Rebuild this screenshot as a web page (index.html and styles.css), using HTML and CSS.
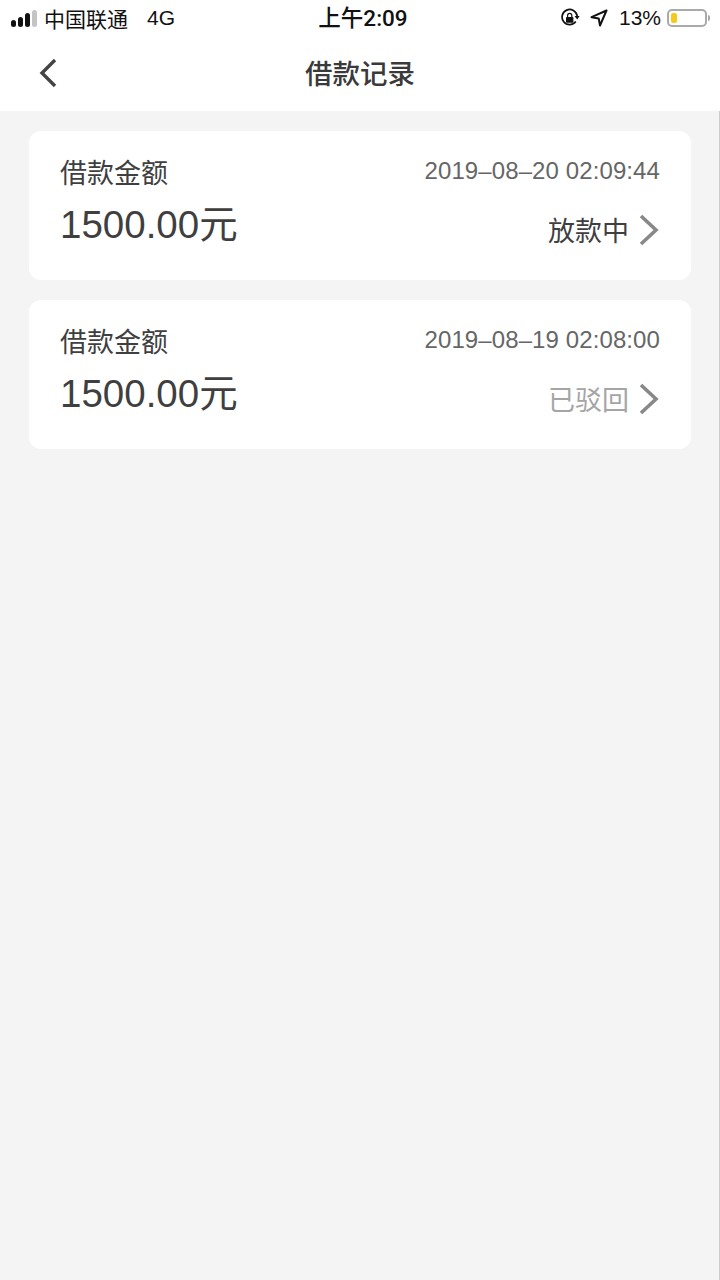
FILE: index.html
```html
<!DOCTYPE html>
<html lang="zh-CN">
<head>
    <meta charset="UTF-8">
    <title>借款记录</title>
    <link rel="stylesheet" href="styles.css">
</head>
<body>
    <div class="status">
        <div class="status-left">
            <div class="signal"><i></i><i></i><i></i><i class="off"></i></div>
            <span class="carrier">中国联通</span>
            <span class="net">4G</span>
        </div>
        <div class="clock">上午2:09</div>
        <div class="status-right">
            <svg class="lock" width="20" height="20" viewBox="0 0 20 20">
                <path d="M15.8 13.6A7.6 7.6 0 1 1 17.2 8" fill="none" stroke="#111" stroke-width="1.7"/>
                <path d="M14.6 8h5l-2.4 3.4z" fill="#111"/>
                <rect x="6" y="9" width="7.4" height="5.8" rx="0.8" fill="#111"/>
                <path d="M7.6 9V7.4a2.1 2.1 0 0 1 4.2 0V9" fill="none" stroke="#111" stroke-width="1.2"/>
            </svg>
            <svg class="arrow" width="18" height="18" viewBox="0 0 18 18">
                <path d="M16.5 1.5L1.5 8.2l7.2 1.2 1.3 7.1z" fill="none" stroke="#111" stroke-width="2" stroke-linejoin="round"/>
            </svg>
            <span class="percent">13%</span>
            <div class="battery"><div class="level"></div></div>
            <div class="battery-tip"></div>
        </div>
    </div>

    <div class="header">
        <svg class="back" width="20" height="32" viewBox="0 0 20 32">
            <path d="M17 3L4 16l13 13" fill="none" stroke="#444" stroke-width="3.4"/>
        </svg>
        <div class="title">借款记录</div>
    </div>

    <div class="list">
        <div class="card">
            <div class="row">
                <span class="label">借款金额</span>
                <span class="time">2019–08–20 02:09:44</span>
            </div>
            <div class="row row-bottom">
                <span class="amount">1500.00元</span>
                <div class="state">
                    <span>放款中</span>
                    <svg class="more" width="22" height="34" viewBox="0 0 22 34">
                        <path d="M3 3l15 14L3 31" fill="none" stroke="#888" stroke-width="3.6"/>
                    </svg>
                </div>
            </div>
        </div>
        <div class="card">
            <div class="row">
                <span class="label">借款金额</span>
                <span class="time">2019–08–19 02:08:00</span>
            </div>
            <div class="row row-bottom">
                <span class="amount">1500.00元</span>
                <div class="state rejected">
                    <span>已驳回</span>
                    <svg class="more" width="22" height="34" viewBox="0 0 22 34">
                        <path d="M3 3l15 14L3 31" fill="none" stroke="#888" stroke-width="3.6"/>
                    </svg>
                </div>
            </div>
        </div>
    </div>
</body>
</html>
```

FILE: styles.css
```css
html, body{
    margin: 0;
    padding: 0;
}
body{
    display: flex;
    flex-direction: column;
    width: 720px;
    height: 1280px;
    overflow: hidden;
    background: #f4f4f4;
    font-family: "Liberation Sans", "Noto Sans CJK SC", sans-serif;
    color: #3f3f3f;
}
.status{
    display: flex;
    justify-content: space-between;
    align-items: center;
    height: 37px;
    box-sizing: border-box;
    padding-bottom: 1px;
    background: #fff;
    color: #111;
}
.status-left{
    display: flex;
    align-items: center;
    width: 240px;
    padding-left: 11px;
    padding-bottom: 1px;
    box-sizing: border-box;
}
.signal{
    display: flex;
    align-items: flex-end;
    gap: 2px;
    height: 17px;
    margin-right: 7px;
    margin-top: 2px;
}
.signal i{
    display: block;
    width: 5px;
    border-radius: 2.5px;
    background: #111;
}
.signal i:nth-child(1){ height: 7px; }
.signal i:nth-child(2){ height: 10px; }
.signal i:nth-child(3){ height: 14px; }
.signal i:nth-child(4){ height: 17px; }
.signal .off{
    background: #c4c4c4;
}
.carrier{
    font-size: 21px;
}
.net{
    font-size: 21px;
    margin-left: 19px;
}
.clock{
    font-family: Roboto, "Noto Sans CJK SC", sans-serif;
    font-size: 22.5px;
    font-weight: 500;
    line-height: 30px;
    margin-left: 6px;
}
.status-right{
    display: flex;
    align-items: center;
    justify-content: flex-end;
    width: 240px;
    padding-right: 10px;
    box-sizing: border-box;
}
.lock{
    margin-right: 10px;
}
.arrow{
    margin-right: 11px;
}
.percent{
    font-size: 21px;
    margin-right: 6px;
}
.battery{
    width: 40px;
    height: 18px;
    padding: 2px;
    border: 2px solid #aaa;
    border-radius: 5px;
    box-sizing: border-box;
}
.level{
    width: 6px;
    height: 100%;
    border-radius: 2px;
    background: #f7c91b;
}
.battery-tip{
    width: 2px;
    height: 6px;
    margin-left: 1px;
    border-radius: 0 2px 2px 0;
    background: #aaa;
}
.header{
    position: relative;
    display: flex;
    align-items: center;
    justify-content: center;
    height: 74px;
    padding-bottom: 4px;
    box-sizing: border-box;
    background: #fff;
}
.back{
    position: absolute;
    left: 38px;
    top: 20px;
}
.title{
    font-size: 27.5px;
    font-weight: 500;
    color: #3a3a3a;
}
.list{
    flex: 1;
    display: flex;
    flex-direction: column;
    gap: 20px;
    padding: 20px 28px 20px 29px;
    border-right: 1px solid #ccc;
}
.card{
    height: 149px;
    padding: 25px 31px 0;
    box-sizing: border-box;
    border-radius: 12px;
    background: #fff;
}
.row{
    display: flex;
    justify-content: space-between;
    align-items: center;
}
.row-bottom{
    margin-top: 8px;
}
.label{
    font-size: 27px;
    line-height: 36px;
}
.time{
    font-size: 24px;
    letter-spacing: 0.1px;
    margin-bottom: 7px;
    color: #666;
}
.amount{
    font-size: 38.5px;
    line-height: 48px;
}
.state{
    display: flex;
    align-items: center;
    gap: 9px;
    margin-top: 10px;
    font-size: 27px;
}
.rejected{
    color: #a5a5a5;
}
.more{
    display: block;
}
```
